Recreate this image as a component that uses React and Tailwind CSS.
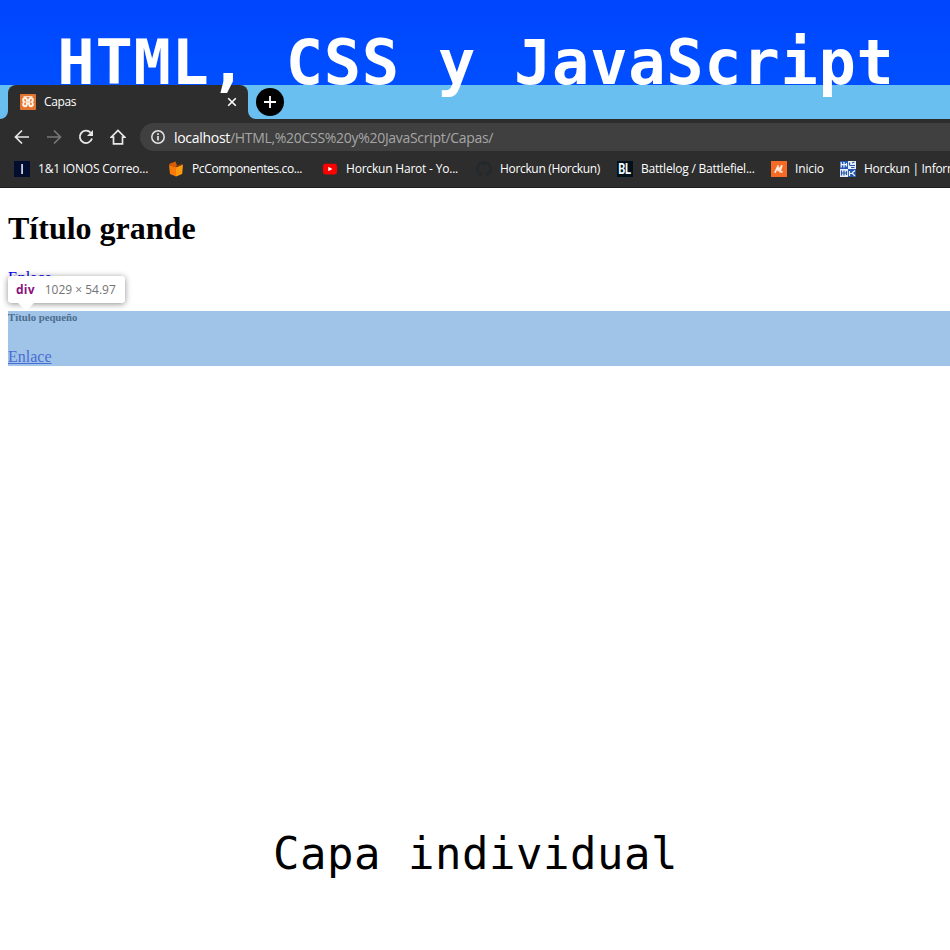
import React from "react";

const ui = "font-['Open_Sans','Noto_Sans',sans-serif]";

function Bookmark({ icon, label, box, text }) {
  return (
    <div className={`flex shrink-0 items-center ${box}`}>
      <span className="mr-2 flex h-4 w-4 shrink-0 items-center justify-center">{icon}</span>
      <span className={`whitespace-nowrap text-[12px] leading-4 text-white ${text}`}>{label}</span>
    </div>
  );
}

const Ionos = (
  <svg width="16" height="16" viewBox="0 0 16 16">
    <rect width="16" height="16" fill="#030d30" />
    <rect x="7.2" y="3" width="1.8" height="10" fill="#c9d2e0" />
  </svg>
);

const PcBox = (
  <svg width="16" height="16" viewBox="0 0 16 16">
    <path d="M1 4L8 6.2V15.6L2 13Z" fill="#f97a08" />
    <path d="M8 6.2L15 3.6L14.2 13L8 15.6Z" fill="#ff9a0c" />
    <path d="M2 2.4L7.6 .6L9 4.6L7.6 6.2L1 4Z" fill="#d95c05" />
    <path d="M9 4.6L13.4 2.6L15 3.6L8 6.2Z" fill="#7d3608" />
  </svg>
);

const YouTube = (
  <svg width="16" height="16" viewBox="0 0 16 16">
    <rect x="1" y="2.7" width="14" height="10.8" rx="2.4" fill="#f00" />
    <path d="M6.3 5.8L10.4 8L6.3 10.3Z" fill="#fff" />
  </svg>
);

const GitHub = (
  <svg width="16" height="16" viewBox="0 0 16 16">
    <path
      fill="#24292e"
      d="M8 0C3.58 0 0 3.58 0 8c0 3.54 2.29 6.53 5.47 7.59.4.07.55-.17.55-.38 0-.19-.01-.82-.01-1.49-2.01.37-2.53-.49-2.69-.94-.09-.23-.48-.94-.82-1.13-.28-.15-.68-.52-.01-.53.63-.01 1.08.58 1.23.82.72 1.21 1.87.87 2.33.66.07-.52.28-.87.51-1.07-1.78-.2-3.64-.89-3.64-3.95 0-.87.31-1.59.82-2.15-.08-.2-.36-1.02.08-2.12 0 0 .67-.21 2.2.82a7.6 7.6 0 0 1 4 0c1.53-1.04 2.2-.82 2.2-.82.44 1.1.16 1.92.08 2.12.51.56.82 1.27.82 2.15 0 3.07-1.87 3.75-3.65 3.95.29.25.54.73.54 1.48 0 1.07-.01 1.93-.01 2.2 0 .21.15.46.55.38A8 8 0 0 0 16 8c0-4.42-3.58-8-8-8z"
    />
  </svg>
);

const Battlelog = (
  <span className="flex h-4 w-4 items-center justify-center overflow-hidden bg-[#02101a]">
    <span className="scale-x-[.74] font-['Roboto',sans-serif] text-[15px] font-bold leading-4 tracking-[-0.3px] text-[#eefaff]">BL</span>
  </span>
);

const Inicio = (
  <svg width="16" height="16" viewBox="0 0 16 16">
    <rect width="16" height="16" fill="#f56a25" />
    <path d="M4.2 11.2L7 5L7.2 9.6L10.8 4.8L9 10.6L11 10.8" fill="none" stroke="#ffe9dc" strokeWidth="1.7" strokeLinejoin="round" strokeLinecap="round" />
  </svg>
);

const Horckun = (
  <svg width="16" height="16" viewBox="0 0 16 16">
    <path d="M0 0H8V8H16V16H8V8H0Z" fill="#2456ae" />
    <path d="M8 0H16V8H8ZM0 8H8V16H0Z" fill="#e6eefa" />
    <path d="M1.2 1V6.5M4 1V6.5M1.2 3.6H6.5M6.5 2V5.5M9.5 10V15M9.5 12.5H12M12 12L15 9.5M12 12L15 15" stroke="#f0f5ff" strokeWidth="1.2" fill="none" />
    <path d="M9.5 1.5V4M9.5 4.5H15M12 2L14.5 1M11 6.5H14.5M1.5 9.5V14.5M4 9.5V14.5M1.5 12H6.5M6.5 10V14" stroke="#2456ae" strokeWidth="1.2" fill="none" />
  </svg>
);

function Tab() {
  return (
    <div className="flex h-[34px] items-end bg-[#69bff0]">
      <svg width="8" height="8" viewBox="0 0 8 8" className="shrink-0">
        <path d="M8 0V8H0A8 8 0 0 0 8 0Z" fill="#2d2d2d" />
      </svg>
      <div className="flex h-[34px] w-[240px] items-center rounded-t-lg bg-[#2d2d2d] pl-3 pr-[11px]">
        <svg width="16" height="16" viewBox="0 0 16 16" className="shrink-0">
          <rect width="16" height="16" rx="1" fill="#e3742f" />
          <path
            d="M5.2 4C2.6 4 2.6 7 4.4 8C2.6 9 2.6 12.2 5.2 12.2C6.8 12.2 6.9 11 6.9 9.2H9.1C9.1 11 9.2 12.2 10.8 12.2C13.4 12.2 13.4 9 11.6 8C13.4 7 13.4 4 10.8 4C9.2 4 9.1 5 9.1 6.8H6.9C6.9 5 6.8 4 5.2 4Z"
            fill="none"
            stroke="#fff3e8"
            strokeWidth="2"
          />
          <path d="M3.5 2.6H12.5" stroke="#fbe3d2" strokeWidth="1" />
        </svg>
        <span className="ml-2 grow text-[12px] leading-4 tracking-[-0.35px] text-white">Capas</span>
        <svg width="10" height="10" viewBox="0 0 10 10" className="shrink-0">
          <path d="M1.2 1.2L8.8 8.8M8.8 1.2L1.2 8.8" stroke="#fff" strokeWidth="1.6" />
        </svg>
      </div>
      <svg width="8" height="8" viewBox="0 0 8 8" className="shrink-0">
        <path d="M0 0V8H8A8 8 0 0 1 0 0Z" fill="#2d2d2d" />
      </svg>
      <span className="mb-[3px] flex h-7 w-7 items-center justify-center rounded-full bg-black">
        <svg width="12" height="12" viewBox="0 0 12 12">
          <path d="M6 0V12M0 6H12" stroke="#fff" strokeWidth="1.8" />
        </svg>
      </span>
    </div>
  );
}

function Toolbar() {
  return (
    <div className="flex h-8 items-end bg-[#2d2d2d]">
      <div className="flex h-7 w-[140px] shrink-0 items-center gap-4 pl-[14px]">
        <svg width="16" height="16" viewBox="0 0 16 16" fill="none" stroke="#e8e8e8" strokeWidth="1.7">
          <path d="M15 8H2M8 1.5L1.5 8L8 14.5" />
        </svg>
        <svg width="16" height="16" viewBox="0 0 16 16" fill="none" stroke="#777" strokeWidth="1.7">
          <path d="M1 8H14M8 1.5L14.5 8L8 14.5" />
        </svg>
        <svg width="16" height="16" viewBox="0 0 16 16">
          <path d="M12.6 3.6A6.2 6.2 0 1 0 14 9.6" fill="none" stroke="#e8e8e8" strokeWidth="1.8" />
          <path d="M15 1V7H9Z" fill="#e8e8e8" />
        </svg>
        <svg width="16" height="16" viewBox="0 0 16 16">
          <path d="M8 1.4L1.2 8.2H3.5V14.8H12.5V8.2H14.8Z" fill="none" stroke="#e8e8e8" strokeWidth="1.7" />
        </svg>
      </div>
      <div className="flex h-7 grow items-center rounded-l-full bg-[#404040] pl-[11px]">
        <svg width="14" height="14" viewBox="0 0 14 14">
          <circle cx="7" cy="7" r="6.2" fill="none" stroke="#e4e4e4" strokeWidth="1.5" />
          <path d="M7 6V10.5M7 3.3V4.9" stroke="#e4e4e4" strokeWidth="1.7" />
        </svg>
        <span className="ml-[9px] mt-px whitespace-nowrap text-[14px] leading-5 tracking-[-0.3px] text-[#a6a6a6]">
          <span className="text-white">localhost</span>/HTML,%20CSS%20y%20JavaScript/Capas/
        </span>
      </div>
    </div>
  );
}

export default function App() {
  return (
    <div className="flex h-[950px] w-[950px] flex-col overflow-hidden bg-white">
      <header className="relative z-10 flex h-[85px] shrink-0 justify-center bg-linear-to-b from-[#0045ff] to-[#004fff]">
        <h1 className="ml-[2px] mt-[23px] h-20 whitespace-pre font-['DejaVu_Sans_Mono',monospace] text-[62px] font-bold leading-[80px] tracking-[0.73px] text-white">HTML, CSS y JavaScript</h1>
      </header>

      <div className={`shrink-0 ${ui}`}>
        <Tab />
        <Toolbar />
        <div className="flex h-[37px] items-center overflow-hidden border-b border-[#1c1c1c] bg-[#2d2d2d] pl-[14px]">
          <Bookmark icon={Ionos} label="1&1 IONOS Correo..." box="w-[154px]" text="tracking-[-0.22px]" />
          <Bookmark icon={PcBox} label="PcComponentes.co..." box="w-[154px]" text="tracking-[-0.37px]" />
          <Bookmark icon={YouTube} label="Horckun Harot - Yo..." box="w-[154px]" text="tracking-[-0.2px]" />
          <Bookmark icon={GitHub} label="Horckun (Horckun)" box="w-[141px]" text="tracking-[-0.33px]" />
          <Bookmark icon={Battlelog} label="Battlelog / Battlefiel..." box="w-[154px]" text="tracking-[-0.22px]" />
          <Bookmark icon={Inicio} label="Inicio" box="w-[69px]" text="tracking-[-0.15px]" />
          <Bookmark icon={Horckun} label="Horckun | Informática" box="" text="tracking-[-0.3px]" />
        </div>
      </div>

      <main className="relative flex grow flex-col pl-2 font-['Liberation_Serif',serif]">
        <h2 className="mt-[22px] h-[37px] text-[32px] font-bold leading-[37px] text-black">Título grande</h2>
        <a className="mt-[22px] h-[18px] text-[16px] leading-[18px] text-[#0000ee] underline">Enlace</a>
        <section className="mt-[24px] flex h-[55px] flex-col bg-[#a0c4e8]">
          <h6 className="h-3 text-[10.72px] font-bold leading-3 text-[#4c6d8d]">Título pequeño</h6>
          <a className="mt-[25px] text-[16px] leading-[18px] text-[#486cd4] underline">Enlace</a>
        </section>

        <div className={`absolute left-2 top-[88px] flex h-[27px] w-[117px] items-center rounded-[3px] bg-white pl-2 pt-px shadow-[0_1px_6px_rgba(0,0,0,0.45)] ${ui}`}>
          <span className="text-[12px] font-bold leading-4 tracking-[0.2px] text-[#881280]">div</span>
          <span className="ml-[10px] whitespace-nowrap text-[12px] leading-4 text-[#737373]">1029 × 54.97</span>
          <svg width="16" height="8" viewBox="0 0 16 8" className="absolute left-[10px] top-[27px]">
            <path d="M0 0H16L8 8Z" fill="#fff" />
          </svg>
        </div>

        <p className="mt-[458px] h-[60px] whitespace-pre pr-[7px] text-center font-['DejaVu_Sans_Mono',monospace] text-[44px] leading-[60px] tracking-[0.5px] text-black">Capa individual</p>
      </main>
    </div>
  );
}
